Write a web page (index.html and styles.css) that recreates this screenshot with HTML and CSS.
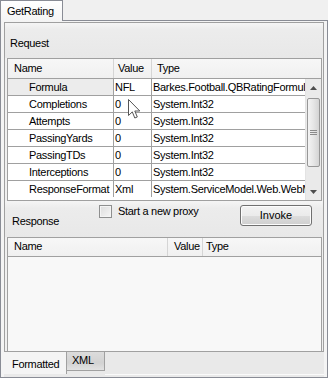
FILE: index.html
```html
<!DOCTYPE html>
<html>
<head>
<meta charset="utf-8">
<title>GetRating</title>
<link rel="stylesheet" href="styles.css">
</head>
<body>
<div class="win">
  <div class="tabstrip">
    <div class="tab">GetRating</div>
    <div class="tabfill"></div>
  </div>
  <div class="frame">
    <div class="panel">
      <div class="band req"><span class="bandlabel">Request</span></div>
      <div class="grid">
        <div class="ghead">
          <div class="c name hname">Name</div>
          <div class="c val hval">Value</div>
          <div class="c type htype">Type</div>
        </div>
        <div class="gbody">
          <div class="rows">
            <div class="row sel"><div class="c name">Formula</div><div class="c val">NFL</div><div class="c type">Barkes.Football.QBRatingFormula</div></div>
            <div class="row"><div class="c name">Completions</div><div class="c val">0</div><div class="c type">System.Int32</div></div>
            <div class="row"><div class="c name">Attempts</div><div class="c val">0</div><div class="c type">System.Int32</div></div>
            <div class="row"><div class="c name">PassingYards</div><div class="c val">0</div><div class="c type">System.Int32</div></div>
            <div class="row"><div class="c name">PassingTDs</div><div class="c val">0</div><div class="c type">System.Int32</div></div>
            <div class="row"><div class="c name">Interceptions</div><div class="c val">0</div><div class="c type">System.Int32</div></div>
            <div class="row last"><div class="c name">ResponseFormat</div><div class="c val">Xml</div><div class="c type">System.ServiceModel.Web.WebMessageFormat</div></div>
          </div>
          <div class="vscroll">
            <div class="arrow"><svg width="7" height="4" viewBox="0 0 7 4"><path d="M0 4 L3.5 0 L7 4 Z" fill="#4d4d4d"/></svg></div>
            <div class="track">
              <div class="thumb">
                <svg width="7" height="7" viewBox="0 0 7 7"><path d="M0 1.5H7M0 3.5H7M0 5.5H7" stroke="#8a8a8a" stroke-width="1"/></svg>
              </div>
            </div>
            <div class="arrow"><svg width="7" height="4" viewBox="0 0 7 4"><path d="M0 0 L3.5 4 L7 0 Z" fill="#4d4d4d"/></svg></div>
          </div>
        </div>
      </div>
      <div class="band resp">
        <span class="bandlabel resplabel">Response</span>
        <label class="chk"><span class="box"></span><span>Start a new proxy</span></label>
        <div class="btn">Invoke</div>
      </div>
      <div class="rgrid">
        <div class="rhead">
          <div class="c rname">Name</div>
          <div class="c rval">Value</div>
          <div class="c rtype">Type</div>
        </div>
        <div class="rbody"></div>
      </div>
    </div>
    <div class="btabs">
      <div class="btab active">Formatted</div>
      <div class="btab">XML</div>
      <div class="bfill"></div>
    </div>
  </div>
  <svg class="cursor" width="13" height="21" viewBox="0 0 13 21">
    <path d="M0.5 0.5 L0.5 16.5 L4.3 12.9 L6.8 19 L9.3 18 L6.8 12 L11.8 12 Z" fill="#ffffff" stroke="#555" stroke-width="1" stroke-linejoin="round"/>
  </svg>
</div>
</body>
</html>
```

FILE: styles.css
```css
* { box-sizing: border-box; }
html, body { margin: 0; padding: 0; }
body {
  font-family: "Liberation Sans", Arial, sans-serif;
  font-size: 11px;
  letter-spacing: -0.3px;
  color: #000;
  background: #f0f0f0;
}
.win {
  position: relative;
  width: 328px;
  height: 378px;
  background: #f0f0f0;
}
.tabstrip {
  display: flex;
  height: 21px;
}
.tab {
  width: 63px;
  height: 21px;
  border: 1px solid #898c95;
  border-bottom: none;
  background: linear-gradient(#ffffff, #f4f4f4);
  padding: 4px 0 0 6px;
  line-height: 13px;
}
.tabfill {
  flex: 1;
  border-bottom: 1px solid #898c95;
}
.frame {
  height: 357px;
  border: 1px solid #898c95;
  border-top: none;
  padding: 1px 3px 0 3px;
  display: flex;
  flex-direction: column;
  background: #f4f4f4;
}
.panel {
  height: 331px;
  border: 1px solid #a0a0a0;
  background: #f0f0f0;
  display: flex;
  flex-direction: column;
}
.band {
  background: linear-gradient(#f5f5f5 0%, #ececec 20%, #e8e8e8 100%);
}
.req {
  height: 35px;
  padding: 13px 0 0 5px;
  line-height: 14px;
}
.bandlabel { display: block; }
.grid {
  margin: 0 1px 0 2px;
  border: 1px solid #a0a0a0;
  background: #fff;
}
.ghead {
  display: flex;
  height: 20px;
  line-height: 19px;
  background: linear-gradient(#f7f7f7, #f0f0f0);
  border-bottom: 1px solid #a0a0a0;
}
.c {
  white-space: nowrap;
  overflow: hidden;
}
.name {
  width: 106px;
  flex: none;
  border-right: 1px solid #a0a0a0;
  padding-left: 21px;
}
.val {
  width: 38px;
  flex: none;
  border-right: 1px solid #a0a0a0;
  padding-left: 1px;
}
.type {
  flex: 1;
  padding-left: 1px;
}
.ghead .c { border-right-color: #d5d5d5; }
.hname { padding-left: 6px; }
.hval { padding-left: 4px; }
.htype { padding-left: 5px; }
.gbody {
  display: flex;
}
.rows {
  flex: 1;
  min-width: 0;
}
.row {
  display: flex;
  height: 17px;
  line-height: 16px;
  border-bottom: 1px solid #a0a0a0;
}
.row.last { border-bottom: none; height: 16px; }
.row.sel .name { background: #ececec; }
.vscroll {
  width: 16px;
  flex: none;
  background: #eaeaea;
  border-left: 1px solid #e3e3e3;
  display: flex;
  flex-direction: column;
}
.arrow {
  height: 17px;
  display: flex;
  align-items: center;
  justify-content: center;
}
.track {
  flex: 1;
  padding: 2px 1px 16px 1px;
}
.thumb {
  height: 69px;
  border: 1px solid #979797;
  border-radius: 2px;
  background: linear-gradient(90deg, #f4f4f4, #e6e6e6 50%, #d4d4d4);
  display: flex;
  align-items: center;
  justify-content: center;
}
.resp {
  height: 36px;
  display: flex;
}
.resplabel {
  align-self: flex-end;
  padding: 0 0 9px 7px;
  line-height: 14px;
  width: 94px;
}
.chk {
  display: flex;
  align-items: center;
  height: 13px;
  margin-top: 4px;
  line-height: 13px;
  width: 141px;
}
.box {
  width: 13px;
  height: 13px;
  border: 1px solid #8e8f8f;
  background: linear-gradient(135deg, #dcdcdc, #f6f6f6);
  box-shadow: inset 0 0 0 1px #f4f4f4;
  margin-right: 6px;
  flex: none;
}
.btn {
  width: 72px;
  height: 21px;
  margin-top: 4px;
  border: 1px solid #707070;
  border-radius: 3px;
  background: linear-gradient(#f2f2f2 0%, #ebebeb 50%, #dddddd 51%, #cfcfcf 100%);
  box-shadow: inset 0 0 0 1px #fcfcfc;
  text-align: center;
  line-height: 19px;
  letter-spacing: 0;
}
.rgrid {
  flex: 1;
  margin: 0 1px 0 2px;
  border: 1px solid #a0a0a0;
  border-bottom: none;
  display: flex;
  flex-direction: column;
  background: #f8f8f8;
}
.rhead {
  display: flex;
  height: 19px;
  line-height: 17px;
  background: linear-gradient(#f7f7f7, #f0f0f0);
  border-bottom: 1px solid #a0a0a0;
}
.rname {
  width: 160px;
  padding-left: 6px;
  border-right: 1px solid #d5d5d5;
}
.rval {
  width: 35px;
  padding-left: 6px;
  border-right: 1px solid #d5d5d5;
}
.rtype {
  flex: 1;
  padding-left: 3px;
}
.rbody { flex: 1; }
.btabs {
  display: flex;
  height: 25px;
  background: #e9e9e9;
}
.btab {
  height: 19px;
  padding: 0 5px;
  line-height: 16px;
  border: 1px solid #a0a0a0;
  border-top: none;
  border-left: none;
  background: linear-gradient(#dcdcdc, #d2d2d2 60%, #e2e2e2);
  width: 38px;
}
.btab.active {
  width: 63px;
  height: 22px;
  background: #f4f4f4;
  border: none;
  border-right: 1px solid #a0a0a0;
  padding: 5px 0 0 8px;
  line-height: 14px;
}
.bfill {
  flex: 1;
  border-bottom: 1px solid #fafafa;
  height: 23px;
}
.cursor {
  position: absolute;
  left: 128px;
  top: 99px;
}
```
